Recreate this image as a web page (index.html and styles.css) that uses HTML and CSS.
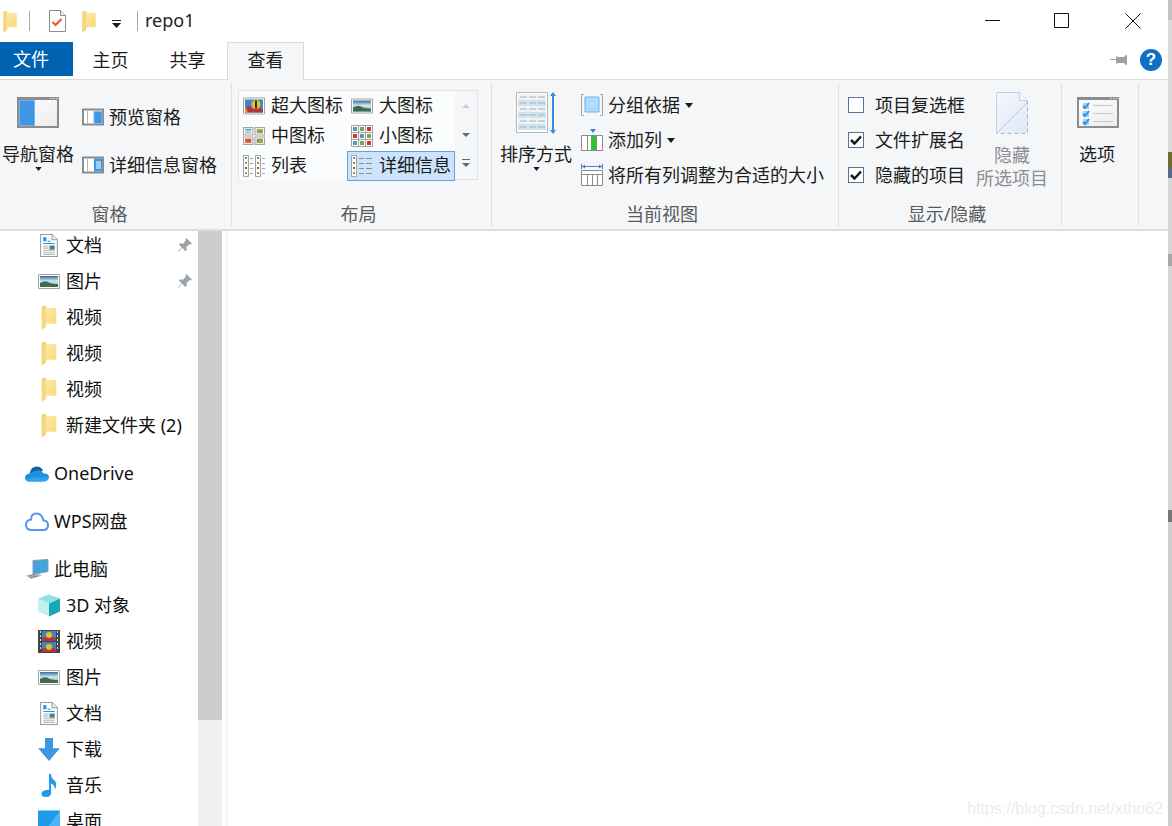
FILE: index.html
```html
<!DOCTYPE html>
<html lang="zh-CN">
<head>
    <meta charset="UTF-8">
    <meta name="viewport" content="width=device-width, initial-scale=1.0">
    <title>repo1</title>
    <link rel="stylesheet" href="styles.css">
</head>
<body>

<!-- shared icons -->
<svg class="sprite" aria-hidden="true">
    <defs>
        <linearGradient id="g-folder" x1="0" y1="0" x2="1" y2="1">
            <stop offset="0" stop-color="#fdeeb8"/>
            <stop offset="1" stop-color="#f8d66f"/>
        </linearGradient>
        <linearGradient id="g-sky" x1="0" y1="0" x2="0" y2="1">
            <stop offset="0" stop-color="#2f6f9e"/>
            <stop offset=".45" stop-color="#cfe6ea"/>
            <stop offset="1" stop-color="#7fa9b8"/>
        </linearGradient>
        <linearGradient id="g-pane" x1="0" y1="0" x2="1" y2="1">
            <stop offset="0" stop-color="#ffffff"/>
            <stop offset="1" stop-color="#ececec"/>
        </linearGradient>
        <linearGradient id="g-note" x1="0" y1="0" x2="1" y2="1">
            <stop offset="0" stop-color="#f4f7fd"/>
            <stop offset="1" stop-color="#dfe8f8"/>
        </linearGradient>
        <symbol id="i-folder" viewBox="0 0 14 22">
            <path d="M0 1q0-1 1-1h3l1 2h8q1 0 1 1v14H4v3l-3 2-1-.5z" fill="url(#g-folder)"/>
            <path d="M0 1q0-1 1-1h2q1 0 1 1v16l-.2 3L1 22l-1-.5z" fill="#f6d67f"/>
        </symbol>
        <symbol id="i-doc" viewBox="0 0 17 22">
            <path d="M.5.5h11l5 5v16H.5z" fill="#fff" stroke="#9a9a9a"/>
            <path d="M11.500.5v5h5" fill="#eee" stroke="#9a9a9a"/>
            <path d="M3 3h3v4H3z" fill="#2f8fe0"/>
            <path d="M7 7h3M3 9h11" stroke="#2f8fe0" fill="none"/>
            <path d="M3 11.500h5M3 13.500h5M3 15.500h11M3 17.500h11M3 19.500h11" stroke="#b5b5b5" fill="none"/>
            <path d="M9 11h5v4H9z" fill="#4d7f96"/>
        </symbol>
        <symbol id="i-photo" viewBox="0 0 22 15">
            <path d="M.5.5h21v14H.5z" fill="#fff" stroke="#a3a3a3"/>
            <path d="M2 2h18v11H2z" fill="url(#g-sky)"/>
            <path d="M2 9q5-3 8-1t10 2v3H2z" fill="#3d6b4f"/>
        </symbol>
        <symbol id="i-pin" viewBox="0 0 16 16">
            <path d="M10 0l6 6-1.500 1-1-.5L10 9.500l.5 3L9 14 5.500 10.500 1.500 15 1 14.500 5 10 2 7l1.500-1.500 3 .5L9.500 2.500 9 1.500z" fill="#9ba3aa"/>
        </symbol>
        <symbol id="i-caret" viewBox="0 0 8 5">
            <path d="M0 0h8L4 5z" fill="#1a1a1a"/>
        </symbol>
        <symbol id="i-balloon" viewBox="0 0 22 17">
            <path d="M.5.5h21v16H.5z" fill="#fff" stroke="#a3a3a3"/>
            <path d="M2 2h18v13H2z" fill="#3f86c8"/>
            <path d="M2 11l4-3 4 4 5-2 5 2v3H2z" fill="#b8333c"/>
            <path d="M2 9l3 6H2z" fill="#e0a020"/>
            <circle cx="13" cy="7" r="4.500" fill="#e8c020"/>
            <path d="M12 3h2v8h-2z" fill="#3a2a18"/>
        </symbol>
        <symbol id="i-medium" viewBox="0 0 21 17">
            <path d="M.5.5h9v7h-9zM11.500.5h9v7h-9zM.5 9.500h9v7h-9zM11.500 9.500h9v7h-9z" fill="#fff" stroke="#a3a3a3"/>
            <path d="M2 2h6v4H2z" fill="url(#g-sky)"/>
            <path d="M13 2h6v4h-6z" fill="#8aa86a"/>
            <path d="M15 3h3v2h-3z" fill="#d8772a"/>
            <path d="M2 11h6v4H2z" fill="#d8572a"/>
            <path d="M13 11h6v4h-6z" fill="#6d9a52"/>
            <path d="M15 12h3v2h-3z" fill="#e0a020"/>
        </symbol>
        <symbol id="i-small" viewBox="0 0 22 22">
            <path d="M.5.5h21v21H.5zM7.500.5v21M14.500.5v21M.5 7.500h21M.5 14.500h21" fill="#fff" stroke="#a3a3a3"/>
            <path d="M2 2h4v4H2zM9 9h4v4H9zM2 16h4v4H2z" fill="#5a98b8"/>
            <path d="M9 2h4v4H9zM16 9h4v4h-4zM9 16h4v4H9z" fill="#7f9f5a"/>
            <path d="M16 2h4v4h-4zM2 9h4v4H2zM16 16h4v4h-4z" fill="#cc3b2a"/>
        </symbol>
        <symbol id="i-list" viewBox="0 0 22 22">
            <path d="M.5.5h5v21h-5zM12.500.5h5v21h-5z" fill="#fff" stroke="#a3a3a3"/>
            <path d="M2 2h2v2H2zM14 2h2v2h-2z" fill="#5a98b8"/>
            <path d="M2 7h2v2H2zM14 7h2v2h-2z" fill="#a88a3a"/>
            <path d="M2 12h2v2H2zM14 12h2v2h-2z" fill="#cc3b2a"/>
            <path d="M2 17h2v2H2zM14 17h2v2h-2z" fill="#7f9f5a"/>
            <path d="M7 3.500h3M7 8.500h3M7 13.500h3M7 18.500h3M19 3.500h3M19 8.500h3M19 13.500h3M19 18.500h3" stroke="#a3a3a3" fill="none"/>
        </symbol>
        <symbol id="i-details" viewBox="0 0 22 22">
            <path d="M.5.5h5v21h-5z" fill="#fff" stroke="#a3a3a3"/>
            <path d="M2 2h2v2H2z" fill="#5a98b8"/>
            <path d="M2 7h2v2H2z" fill="#a88a3a"/>
            <path d="M2 12h2v2H2z" fill="#cc3b2a"/>
            <path d="M2 17h2v2H2z" fill="#7f9f5a"/>
            <path d="M8 3.500h5M15 3.500h6M8 8.500h5M15 8.500h6M8 13.500h5M15 13.500h6M8 18.500h5M15 18.500h6" stroke="#8c8c8c" fill="none"/>
        </symbol>
    </defs>
</svg>

<div class="window">
    <!-- title bar -->
    <div class="titlebar">
        <svg class="qa-folder"><use href="#i-folder"/></svg>
        <span class="qa-sep"></span>
        <svg class="qa-doc" viewBox="0 0 17 22">
            <path d="M.5.5h11l5 5v16H.5z" fill="#fff" stroke="#8c8c8c"/>
            <path d="M11.500.5v5h5" fill="#eee" stroke="#8c8c8c"/>
            <path d="M3.500 12l3 3 6-6" fill="none" stroke="#e8562a" stroke-width="2"/>
        </svg>
        <svg class="qa-folder2"><use href="#i-folder"/></svg>
        <svg class="qa-down" viewBox="0 0 9 8">
            <path d="M0 0h9v1H0zM0 3h9L4.500 8z" fill="#1a1a1a"/>
        </svg>
        <span class="qa-sep qa-sep-2"></span>
        <span class="title-text">repo1</span>
        <div class="win-buttons">
            <svg class="win-btn" viewBox="0 0 16 16"><path d="M0 7.500h15" stroke="#111" fill="none"/></svg>
            <svg class="win-btn" viewBox="0 0 16 16"><path d="M.5.5h14v14H.5z" stroke="#111" fill="none"/></svg>
            <svg class="win-btn win-close" viewBox="0 0 16 16"><path d="M.5.5l15 15M15.500.5l-15 15" stroke="#111" fill="none"/></svg>
        </div>
    </div>

    <!-- tabs -->
    <div class="tabs">
        <div class="tab tab-file">文件</div>
        <div class="tab">主页</div>
        <div class="tab">共享</div>
        <div class="tab tab-active">查看</div>
        <div class="tabs-right">
            <svg class="tab-pin" viewBox="0 0 18 12">
                <path d="M0 5h7V6H0z" fill="#9ba3aa"/>
                <path d="M6 2l2 1h6l2-2h1v10h-1l-2-2H8l-2 1z" fill="#9ba3aa"/>
            </svg>
            <span class="help">?</span>
        </div>
    </div>

    <!-- ribbon -->
    <div class="ribbon">
        <div class="group group-pane">
            <div class="group-body">
                <div class="big big-nav">
                    <div class="big-icon">
                        <svg class="ic-42" viewBox="0 0 42 31">
                            <path d="M1 1h40v29H1z" fill="url(#g-pane)" stroke="#8c8c8c" stroke-width="2"/>
                            <path d="M0 0h42v3H0z" fill="#8c8c8c"/>
                            <path d="M33 1h2v1h-2zM36 1h2v1h-2zM39 1h2v1h-2z" fill="#d0d0d0"/>
                            <path d="M2 3h16v26H2z" fill="#71b4ee"/>
                            <path d="M3 4h14v24H3z" fill="#3f97e4"/>
                        </svg>
                    </div>
                    <div class="big-label">导航窗格</div>
                    <svg class="caret"><use href="#i-caret"/></svg>
                </div>
                <div class="small-stack stack-pane">
                    <div class="small-row">
                        <svg class="ic-22" viewBox="0 0 22 17">
                            <path d="M1 1h20v15H1z" fill="#fff" stroke="#8c8c8c" stroke-width="2"/>
                            <path d="M5.500 2v13" stroke="#b5b5b5" fill="none"/>
                            <path d="M12 3h8v12h-8z" fill="#3f97e4" stroke="#7cbcf0"/>
                        </svg>
                        <span>预览窗格</span>
                    </div>
                    <div class="small-row">
                        <svg class="ic-22" viewBox="0 0 22 17">
                            <path d="M1 1h20v15H1z" fill="#fff" stroke="#8c8c8c" stroke-width="2"/>
                            <path d="M5.500 2v13" stroke="#b5b5b5" fill="none"/>
                            <path d="M12 2h8v13h-8z" fill="#3f97e4"/>
                            <path d="M14 5.500h5M14 7.500h5M14 9.500h5M14 11.500h5" stroke="#fff" fill="none"/>
                        </svg>
                        <span>详细信息窗格</span>
                    </div>
                </div>
            </div>
            <div class="group-label label-pane">窗格</div>
        </div>

        <div class="group group-layout">
            <div class="group-body">
                <div class="gallery">
                    <div class="gallery-items">
                        <div class="gallery-item"><svg class="ic-22"><use href="#i-balloon"/></svg><span>超大图标</span></div>
                        <div class="gallery-item"><svg class="ic-22"><use href="#i-photo"/></svg><span>大图标</span></div>
                        <div class="gallery-item"><svg class="ic-22"><use href="#i-medium"/></svg><span>中图标</span></div>
                        <div class="gallery-item"><svg class="ic-22"><use href="#i-small"/></svg><span>小图标</span></div>
                        <div class="gallery-item"><svg class="ic-22"><use href="#i-list"/></svg><span>列表</span></div>
                        <div class="gallery-item selected"><svg class="ic-22"><use href="#i-details"/></svg><span>详细信息</span></div>
                    </div>
                    <div class="gallery-scroll">
                        <svg class="scroll-btn" viewBox="0 0 8 12"><path d="M0 8h8L4 4z" fill="#c9ced6"/></svg>
                        <svg class="scroll-btn" viewBox="0 0 8 12"><path d="M0 4h8L4 8z" fill="#5d6b82"/></svg>
                        <svg class="scroll-btn" viewBox="0 0 8 12"><path d="M0 1h8v1H0zM0 5h8L4 9z" fill="#5d6b82"/></svg>
                    </div>
                </div>
            </div>
            <div class="group-label">布局</div>
        </div>

        <div class="group group-view">
            <div class="group-body">
                <div class="big big-sort">
                    <div class="big-icon">
                        <svg class="ic-sort" viewBox="0 0 41 42">
                            <path d="M.5.5h31v40H.5z" fill="#fff" stroke="#b5b5b5"/>
                            <path d="M2 2h28v6H2zM2 14h28v6H2zM2 26h28v6H2z" fill="#eef3f6"/>
                            <path d="M2 8h28v6H2zM2 20h28v6H2zM2 32h28v6H2z" fill="#cfe3ee"/>
                            <path d="M4 5h7M13 5h7M22 5h7M4 11h7M13 11h7M22 11h7M4 17h7M13 17h7M22 17h7M4 23h7M13 23h7M22 23h7M4 29h7M13 29h7M22 29h7M4 35h7M13 35h7M22 35h7" stroke="#a8b0b6" fill="none"/>
                            <path d="M37 0l3 4h-2v34h2l-3 4-3-4h2V4h-2z" fill="#2f8fe0"/>
                        </svg>
                    </div>
                    <div class="big-label">排序方式</div>
                    <svg class="caret"><use href="#i-caret"/></svg>
                </div>
                <div class="small-stack stack-view">
                    <div class="small-row">
                        <svg class="ic-22" viewBox="0 0 22 22">
                            <path d="M3 .5H.5v21H3M19 .5h2.500v21H19" stroke="#a3a3a3" fill="none"/>
                            <path d="M4 3h14v15H4z" fill="#b5dbfb" stroke="#6fb1ea"/>
                        </svg>
                        <span>分组依据</span>
                        <svg class="caret-inline"><use href="#i-caret"/></svg>
                    </div>
                    <div class="small-row">
                        <svg class="ic-22" viewBox="0 0 22 22">
                            <path d="M.5 6.500h21v15H.5zM6.500 6.500v15M15.500 6.500v15" fill="#fff" stroke="#8c8c8c"/>
                            <path d="M10 7h5v14h-5z" fill="#2fc42f"/>
                            <path d="M9 0h6l-3 4z" fill="#3c87cc"/>
                        </svg>
                        <span>添加列</span>
                        <svg class="caret-inline"><use href="#i-caret"/></svg>
                    </div>
                    <div class="small-row">
                        <svg class="ic-22" viewBox="0 0 22 22">
                            <path d="M.5 0v5M21.500 0v5" stroke="#3c87cc" fill="none"/>
                            <path d="M1 2.500h20" stroke="#3c87cc" fill="none"/>
                            <path d="M1 2.500L4 .5v4zM21 2.500L18 .5v4z" fill="#3c87cc"/>
                            <path d="M.5 6.500h21v15H.5zM.5 10.500h21M6.500 10.500v11M11.500 10.500v11M16.500 10.500v11" fill="#fff" stroke="#8c8c8c"/>
                        </svg>
                        <span>将所有列调整为合适的大小</span>
                    </div>
                </div>
            </div>
            <div class="group-label">当前视图</div>
        </div>

        <div class="group group-show">
            <div class="group-body">
                <div class="small-stack stack-checks">
                    <div class="check-row"><span class="check"></span><span>项目复选框</span></div>
                    <div class="check-row"><span class="check"><svg viewBox="0 0 12 10"><path d="M1 5l3.500 3.500L11 1.500" fill="none" stroke="#1a1a1a" stroke-width="2.500"/></svg></span><span>文件扩展名</span></div>
                    <div class="check-row"><span class="check"><svg viewBox="0 0 12 10"><path d="M1 5l3.500 3.500L11 1.500" fill="none" stroke="#1a1a1a" stroke-width="2.500"/></svg></span><span>隐藏的项目</span></div>
                </div>
                <div class="big big-hide">
                    <div class="big-icon">
                        <svg class="ic-hide" viewBox="0 0 32 42">
                            <path d="M.5 41V.5h23l8 8V41z" fill="url(#g-note)"/>
                            <path d="M.5 41V.5h23l8 8" fill="none" stroke="#c5cfe2"/>
                            <path d="M31.500 8.500V41.500H.5" fill="none" stroke="#aab4c8" stroke-dasharray="4 3"/>
                            <path d="M23.500.5v8h8" fill="#f6f8fc" stroke="#c5cfe2"/>
                            <path d="M1 41L31 11" stroke="#bcc8de" fill="none"/>
                        </svg>
                    </div>
                    <div class="big-label">隐藏<br>所选项目</div>
                </div>
            </div>
            <div class="group-label">显示/隐藏</div>
        </div>

        <div class="group group-options">
            <div class="group-body">
                <div class="big big-options">
                    <div class="big-icon">
                        <svg class="ic-42" viewBox="0 0 42 31">
                            <path d="M1 1h40v29H1z" fill="url(#g-pane)" stroke="#8c8c8c" stroke-width="2"/>
                            <path d="M0 0h42v3H0z" fill="#8c8c8c"/>
                            <path d="M33 1h2v1h-2zM36 1h2v1h-2zM39 1h2v1h-2z" fill="#d0d0d0"/>
                            <path d="M6 6h6v6H6zM6 14h6v6H6zM6 22h6v6H6z" fill="#a8d2f5"/>
                            <path d="M6 9l2 2 4-5M6 17l2 2 4-5M6 25l2 2 4-5" fill="none" stroke="#2f8fe0" stroke-width="2"/>
                            <path d="M16 8.500h20M16 16.500h20M16 24.500h20" stroke="#c5c5c5" fill="none"/>
                        </svg>
                    </div>
                    <div class="big-label">选项</div>
                </div>
            </div>
            <div class="group-label"></div>
        </div>
    </div>

    <!-- content -->
    <div class="content">
        <div class="nav">
            <div class="nav-list">
                <div class="nav-row"><svg class="nav-ic"><use href="#i-doc"/></svg><span class="nav-text">文档</span><svg class="nav-pin"><use href="#i-pin"/></svg></div>
                <div class="nav-row"><svg class="nav-ic"><use href="#i-photo"/></svg><span class="nav-text">图片</span><svg class="nav-pin"><use href="#i-pin"/></svg></div>
                <div class="nav-row"><svg class="nav-ic"><use href="#i-folder"/></svg><span class="nav-text">视频</span></div>
                <div class="nav-row"><svg class="nav-ic"><use href="#i-folder"/></svg><span class="nav-text">视频</span></div>
                <div class="nav-row"><svg class="nav-ic"><use href="#i-folder"/></svg><span class="nav-text">视频</span></div>
                <div class="nav-row"><svg class="nav-ic"><use href="#i-folder"/></svg><span class="nav-text">新建文件夹 (2)</span></div>

                <div class="nav-row nav-top">
                    <svg class="nav-ic" viewBox="0 0 24 16">
                        <path d="M5 7q1-6 7-6 4 0 6 4l-8 5-5 4z" fill="#0f5fae"/>
                        <path d="M9 6q3-2 6-1l4 3q5 0 5 4l-6 4H3q-3-1-3-4t4-4z" fill="#1f8fe0"/>
                        <path d="M1 14q1 2 3 2h15q4 0 5-4H8z" fill="#28a8ea"/>
                    </svg>
                    <span class="nav-text">OneDrive</span>
                </div>
                <div class="nav-row nav-top">
                    <svg class="nav-ic" viewBox="0 0 24 20">
                        <path d="M6 18.500h13q4-.5 4-5 0-4-4.500-4.500Q17 2 11.500 2T6 8q-5 .5-5 5.500 0 4.500 5 5z" fill="none" stroke="#5b93f0" stroke-width="2"/>
                    </svg>
                    <span class="nav-text">WPS网盘</span>
                </div>
                <div class="nav-row nav-top">
                    <svg class="nav-ic" viewBox="0 0 24 20">
                        <path d="M8 1l15-1v12L8 15z" fill="#3fa4e0" stroke="#8c9aa6"/>
                        <path d="M1 16l11-2 5 2-11 3.500z" fill="#b4babf"/>
                        <path d="M3 16.500l8-1.500M5 18l8-1.500" stroke="#7c8a96" fill="none"/>
                    </svg>
                    <span class="nav-text">此电脑</span>
                </div>
                <div class="nav-row">
                    <svg class="nav-ic" viewBox="0 0 22 22">
                        <path d="M11 0l11 4-11 5L0 4z" fill="#8fe0e4"/>
                        <path d="M0 4l11 5v13L0 17z" fill="#c5f0f0"/>
                        <path d="M22 4l-11 5v13l11-5z" fill="#18a8b8"/>
                    </svg>
                    <span class="nav-text">3D 对象</span>
                </div>
                <div class="nav-row">
                    <svg class="nav-ic" viewBox="0 0 22 23">
                        <path d="M0 0h22v23H0z" fill="#444"/>
                        <path d="M2 1h1v2H2zM2 5h1v2H2zM2 9h1v2H2zM2 13h1v2H2zM2 17h1v2H2zM19 1h1v2h-1zM19 5h1v2h-1zM19 9h1v2h-1zM19 13h1v2h-1zM19 17h1v2h-1z" fill="#ddd"/>
                        <path d="M4 1h14v10H4zM4 12h14v10H4z" fill="#3f86c8"/>
                        <path d="M4 8l7-2 7 2v3H4zM4 19l7-2 7 2v3H4z" fill="#b8333c"/>
                        <circle cx="11" cy="5" r="3" fill="#e8c020"/>
                        <circle cx="11" cy="17" r="3" fill="#e8c020"/>
                    </svg>
                    <span class="nav-text">视频</span>
                </div>
                <div class="nav-row"><svg class="nav-ic"><use href="#i-photo"/></svg><span class="nav-text">图片</span></div>
                <div class="nav-row"><svg class="nav-ic"><use href="#i-doc"/></svg><span class="nav-text">文档</span></div>
                <div class="nav-row">
                    <svg class="nav-ic" viewBox="0 0 19 20">
                        <path d="M6 0h7v9h6l-9.500 11L0 9h6z" fill="#3f97e4"/>
                    </svg>
                    <span class="nav-text">下载</span>
                </div>
                <div class="nav-row">
                    <svg class="nav-ic" viewBox="0 0 16 22">
                        <path d="M8 0h2q0 4 3 6t1 9q-1-5-4-6v9q0 4-5 4t-4-4q1-3 7-3z" fill="#1e9be8"/>
                    </svg>
                    <span class="nav-text">音乐</span>
                </div>
                <div class="nav-row">
                    <svg class="nav-ic" viewBox="0 0 22 22">
                        <path d="M0 0h22v22H0z" fill="#1e9be8"/>
                        <path d="M22 0v22H6z" fill="#4cb4f0"/>
                    </svg>
                    <span class="nav-text">桌面</span>
                </div>
            </div>
        </div>
        <div class="scrollbar"><div class="thumb"></div></div>
        <div class="main"></div>
    </div>

    <div class="watermark">https://blog.csdn.net/xtho62</div>
</div>

<div class="edge"></div>

</body>
</html>
```

FILE: styles.css
```css
html, body {
    height: 100%;
}
body {
    font-family: "Noto Sans", "Noto Sans CJK SC", sans-serif;
    font-size: 18px;
    line-height: 24px;
    color: #1c1c1c;
    margin: 0;
    padding: 0;
    background-color: #fff;
    display: flex;
    overflow: hidden;
}
svg {
    display: block;
    flex: none;
}
.sprite {
    position: absolute;
    width: 0;
    height: 0;
}
.window {
    flex: 1;
    position: relative;
    display: flex;
    flex-direction: column;
    min-width: 0;
    overflow: hidden;
}
.edge {
    width: 4px;
    background: linear-gradient(to bottom, #c2c2c2 0, #c2c2c2 20px, #dadada 20px, #dadada 152px, #6f6b30 152px, #6f6b30 168px, #5a6a8a 168px, #5a6a8a 178px, #d6d6d6 178px, #d6d6d6 254px, #a8a8a8 254px, #a8a8a8 266px, #d6d6d6 266px, #d6d6d6 510px, #777 510px, #777 522px, #cfcfcf 522px, #cfcfcf 100%);
}

/* title bar */
.titlebar {
    height: 42px;
    display: flex;
    align-items: center;
    flex: none;
}
.qa-folder {
    width: 14px;
    height: 21px;
    margin-left: 3px;
}
.qa-sep {
    width: 1px;
    height: 20px;
    background: #a8a8a8;
    margin-left: 12px;
}
.qa-sep-2 {
    margin-left: 16px;
}
.qa-doc {
    width: 17px;
    height: 22px;
    margin-left: 19px;
}
.qa-folder2 {
    width: 14px;
    height: 21px;
    margin-left: 16px;
}
.qa-down {
    width: 9px;
    height: 8px;
    margin-left: 16px;
    margin-top: 5px;
}
.title-text {
    margin-left: 7px;
    padding-bottom: 2px;
    font-size: 18px;
    color: #222;
}
.win-buttons {
    margin-left: auto;
    margin-right: 27px;
    display: flex;
    gap: 53px;
}
.win-btn {
    width: 16px;
    height: 16px;
}
.win-close {
    margin-left: 2px;
}

/* tabs */
.tabs {
    height: 38px;
    display: flex;
    flex: none;
    border-bottom: 1px solid #dadbdc;
    box-sizing: border-box;
}
.tab {
    width: 77px;
    height: 38px;
    line-height: 36px;
    padding-right: 2px;
    text-align: center;
    box-sizing: border-box;
}
.tab-file {
    width: 73px;
    height: 34px;
    line-height: 34px;
    padding-right: 11px;
    background-color: #0063b1;
    color: #fff;
}
.tab-active {
    background-color: #f4f6f8;
    border: 1px solid #d9dadb;
    border-bottom: none;
    padding-right: 0;
    line-height: 34px;
}
.tabs-right {
    margin-left: auto;
    display: flex;
    align-items: center;
    height: 36px;
    padding-right: 6px;
}
.tab-pin {
    width: 18px;
    height: 12px;
}
.help {
    width: 22px;
    height: 22px;
    margin-left: 12px;
    border-radius: 50%;
    background-color: #0f6fc6;
    color: #fff;
    font-family: "Liberation Sans", sans-serif;
    font-weight: bold;
    font-size: 17px;
    line-height: 22px;
    text-align: center;
}

/* ribbon */
.ribbon {
    height: 151px;
    flex: none;
    display: flex;
    background-color: #f4f6f8;
    padding: 3px 0;
    box-sizing: border-box;
    border-bottom: 2px solid #dcdddd;
}
.group {
    display: flex;
    flex-direction: column;
    border-right: 1px solid #dde0e3;
    box-sizing: border-box;
}
.group-pane { width: 232px; }
.group-layout { width: 260px; }
.group-view { width: 347px; }
.group-show { width: 223px; }
.group-options { width: 77px; }
.group-body {
    flex: 1;
    display: flex;
}
.group-label {
    height: 26px;
    line-height: 28px;
    padding-right: 6px;
    text-align: center;
    color: #5a5a5a;
}
.label-pane {
    padding-right: 12px;
}
.big {
    display: flex;
    flex-direction: column;
    align-items: center;
    width: 72px;
}
.big-icon {
    height: 59px;
    display: flex;
    align-items: center;
}
.big-label {
    text-align: center;
    white-space: nowrap;
}
.big-nav { margin-left: 2px; }
.big-sort { margin-left: 8px; }
.big-hide { margin-left: 9px; color: #8a8e93; }
.big-hide .big-label { line-height: 23px; margin-top: 2px; }
.big-options { width: 70px; }
.big-options .ic-42 { margin-left: 2px; }
.ic-42 {
    width: 42px;
    height: 31px;
}
.ic-sort {
    width: 41px;
    height: 42px;
}
.ic-hide {
    width: 32px;
    height: 42px;
}
.ic-22 {
    width: 22px;
    height: 22px;
}
.caret {
    width: 7px;
    height: 4px;
    margin-top: 1px;
}
.caret-inline {
    width: 8px;
    height: 5px;
}
.small-stack {
    display: flex;
    flex-direction: column;
}
.stack-pane {
    margin-left: 8px;
    padding-top: 19px;
    gap: 18px;
}
.stack-view {
    margin-left: 9px;
    padding-top: 7px;
    gap: 5px;
}
.stack-checks {
    margin-left: 9px;
    padding-top: 7px;
    gap: 5px;
    width: 119px;
}
.small-row {
    height: 30px;
    display: flex;
    align-items: center;
    gap: 5px;
    white-space: nowrap;
}
.check-row {
    height: 30px;
    display: flex;
    align-items: center;
    gap: 11px;
    white-space: nowrap;
}
.check {
    width: 16px;
    height: 16px;
    box-sizing: border-box;
    border: 1px solid #5a7096;
    background-color: #fff;
    display: flex;
    align-items: center;
    justify-content: center;
}
.check svg {
    width: 12px;
    height: 10px;
}

/* layout gallery */
.gallery {
    margin: 7px 0 0 6px;
    width: 240px;
    height: 90px;
    display: flex;
    box-sizing: border-box;
    border: 1px solid #dfe3e8;
}
.gallery-items {
    width: 216px;
    display: grid;
    grid-template-columns: 108px 108px;
    grid-auto-rows: 30px;
    background-color: #fbfcfd;
    margin-bottom: -1px;
}
.gallery-item {
    display: flex;
    align-items: center;
    gap: 6px;
    padding-left: 4px;
    padding-bottom: 2px;
    box-sizing: border-box;
    white-space: nowrap;
}
.gallery-item svg {
    margin-top: 2px;
}
.gallery-item.selected {
    background-color: #cce4fb;
    border: 1px solid #62a3e0;
    padding-left: 3px;
}
.gallery-scroll {
    flex: 1;
    display: flex;
    flex-direction: column;
    justify-content: space-around;
    align-items: center;
}
.scroll-btn {
    width: 8px;
    height: 12px;
}

/* navigation */
.content {
    flex: 1;
    display: flex;
    min-height: 0;
}
.nav {
    width: 198px;
    flex: none;
    overflow: hidden;
}
.nav-list {
    margin-top: -4px;
}
.nav-row {
    height: 36px;
    display: flex;
    align-items: center;
    padding-left: 38px;
    padding-right: 6px;
    box-sizing: border-box;
    color: #111;
    white-space: nowrap;
}
.nav-ic {
    width: 22px;
    height: 23px;
}
.nav-text {
    margin-left: 6px;
}
.nav-pin {
    width: 15px;
    height: 15px;
    margin-left: auto;
}
.nav-top {
    margin-top: 12px;
    padding-left: 25px;
}
.nav-top .nav-ic {
    width: 24px;
}
.nav-top .nav-text {
    margin-left: 5px;
}
.scrollbar {
    width: 24px;
    flex: none;
    background-color: #f0f0f0;
}
.thumb {
    height: 489px;
    background-color: #cdcdcd;
}
.main {
    flex: 1;
    margin-left: 3px;
    border-left: 3px solid #f8f8f8;
    background-color: #fff;
}
.watermark {
    position: absolute;
    right: 5px;
    bottom: 5px;
    font-family: "Liberation Sans", sans-serif;
    font-size: 16px;
    line-height: 24px;
    color: #ececec;
}
```
